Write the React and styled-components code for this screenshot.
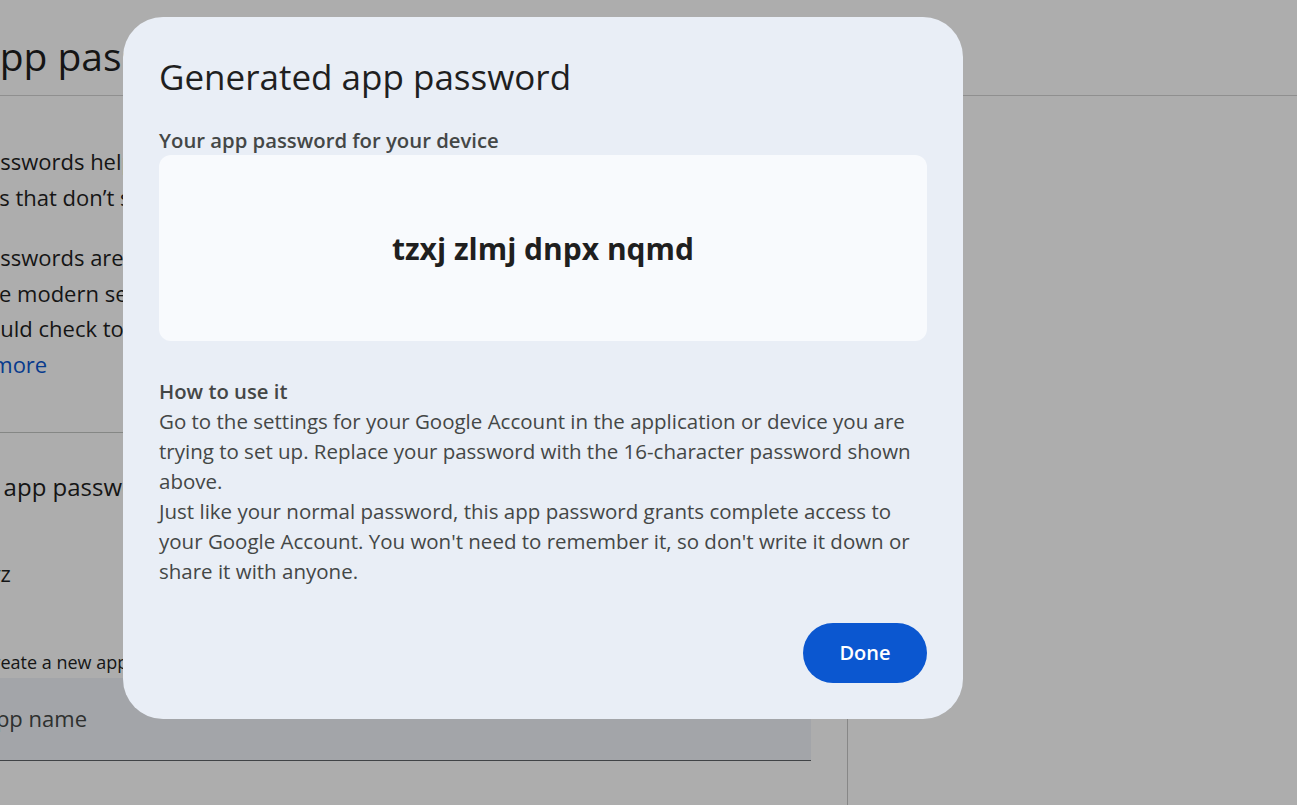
import React from "react";
import styled, { createGlobalStyle } from "styled-components";

const GlobalStyle = createGlobalStyle`
  html, body {
    margin: 0;
    padding: 0;
    background: #ffffff;
  }
  body {
    font-family: "Open Sans", Roboto, "Liberation Sans", Arial, sans-serif;
    color: #1f1f1f;
  }
`;

const Page = styled.div`
  position: relative;
  width: 100vw;
  height: 100vh;
  overflow: hidden;
  background: #ffffff;
`;

const Header = styled.header`
  height: 95px;
  border-bottom: 1px solid #d3d3d3;
  display: flex;
  align-items: flex-start;
`;

const PageTitle = styled.h1`
  margin: 30px 0 0 -25px;
  font-size: 39px;
  line-height: 52px;
  font-weight: 400;
  white-space: nowrap;
  color: #1f1f1f;
`;

const Main = styled.div`
  display: grid;
  grid-template-columns: 848px 1fr;
  height: calc(100vh - 96px);
`;

const Column = styled.section`
  border-right: 1px solid #c7c7c7;
  overflow: hidden;
`;

const Content = styled.div`
  margin-left: -72px;
  width: 883px;
  padding-top: 48px;
`;

const Para = styled.p`
  margin: 0 0 25px;
  font-size: 22px;
  line-height: 35.5px;
  color: #1f1f1f;
  white-space: nowrap;
`;

const MoreLink = styled.a`
  color: #0b57d0;
  text-decoration: none;
`;

const Divider = styled.hr`
  margin: 50px 0 0;
  border: none;
  border-top: 1px solid #c4c7c5;
`;

const ListSection = styled.div`
  padding-left: 17px;
`;

const SectionTitle = styled.h2`
  margin: 38px 0 0;
  font-size: 24px;
  line-height: 32px;
  font-weight: 400;
  white-space: nowrap;
`;

const AppRow = styled.div`
  margin-top: 54px;
  padding-left: 33px;
  font-size: 22px;
  line-height: 32px;
`;

const Hint = styled.p`
  margin: 60px 0 0;
  padding-left: 31px;
  font-size: 18px;
  line-height: 26px;
  color: #1f1f1f;
  white-space: nowrap;
`;

const Field = styled.div`
  margin-top: 3px;
  height: 83px;
  background: #f0f4f9;
  border-bottom: 1px solid #5f6368;
  display: flex;
  align-items: center;
  padding-left: 54px;
  padding-bottom: 2px;
  box-sizing: border-box;
  font-size: 22px;
  color: #444746;
`;

const Scrim = styled.div`
  position: absolute;
  inset: 0;
  background: rgba(0, 0, 0, 0.32);
  display: flex;
  align-items: flex-start;
  padding: 17px 0 0 123px;
`;

const Dialog = styled.div`
  width: 840px;
  height: 702px;
  box-sizing: border-box;
  padding: 38px 36px 36px;
  background: #e9eef6;
  border-radius: 40px;
  display: flex;
  flex-direction: column;
`;

const DialogTitle = styled.h2`
  margin: 0;
  font-size: 35px;
  line-height: 44px;
  font-weight: 400;
  color: #1f1f1f;
`;

const Label = styled.h3`
  margin: 27px 0 0;
  font-size: 20.3px;
  line-height: 28px;
  font-weight: 600;
  color: #444746;
`;

const PasswordBox = styled.div`
  margin-top: 1px;
  height: 186px;
  border-radius: 12px;
  background: #f8fafd;
  display: flex;
  align-items: center;
  justify-content: center;
  font-size: 30px;
  font-weight: 700;
  color: #1f1f1f;
`;

const HowTitle = styled.h3`
  margin: 35px 0 0;
  font-size: 20.3px;
  line-height: 30px;
  font-weight: 600;
  color: #444746;
`;

const Body = styled.p`
  margin: 0;
  font-size: 20.5px;
  line-height: 30px;
  color: #444746;
`;

const Actions = styled.div`
  margin-top: auto;
  display: flex;
  justify-content: flex-end;
`;

const DoneButton = styled.button`
  width: 124px;
  height: 60px;
  border: none;
  border-radius: 30px;
  background: #0b57d0;
  color: #ffffff;
  font-family: inherit;
  font-size: 20px;
  font-weight: 600;
  line-height: 1;
  cursor: pointer;
`;

export default function App() {
  return (
    <>
      <GlobalStyle />
      <Page>
        <Header>
          <PageTitle>App passwords</PageTitle>
        </Header>
        <Main>
          <Column>
            <Content>
              <Para>
                App passwords help you sign into your Google Account on older apps and
                <br />
                services that don’t support modern security standards.
              </Para>
              <Para>
                App passwords are less secure than using up-to-date apps and services that
                <br />
                with the modern security standards. Before you create an app password, you
                <br />
                we should check to see if your app needs this in order to sign in.
                <br />
                <MoreLink href="#">Learn more</MoreLink>
              </Para>
              <Divider />
              <ListSection>
                <SectionTitle>Your app passwords</SectionTitle>
                <AppRow>xyz</AppRow>
              </ListSection>
              <Hint>To create a new app specific password, type a name for it below...</Hint>
              <Field>App name</Field>
            </Content>
          </Column>
          <div />
        </Main>
        <Scrim>
          <Dialog role="dialog">
            <DialogTitle>Generated app password</DialogTitle>
            <Label>Your app password for your device</Label>
            <PasswordBox>tzxj zlmj dnpx nqmd</PasswordBox>
            <HowTitle>How to use it</HowTitle>
            <Body>
              Go to the settings for your Google Account in the application or device you are
              <br />
              trying to set up. Replace your password with the 16-character password shown
              <br />
              above.
              <br />
              Just like your normal password, this app password grants complete access to
              <br />
              your Google Account. You won't need to remember it, so don't write it down or
              <br />
              share it with anyone.
            </Body>
            <Actions>
              <DoneButton>Done</DoneButton>
            </Actions>
          </Dialog>
        </Scrim>
      </Page>
    </>
  );
}
